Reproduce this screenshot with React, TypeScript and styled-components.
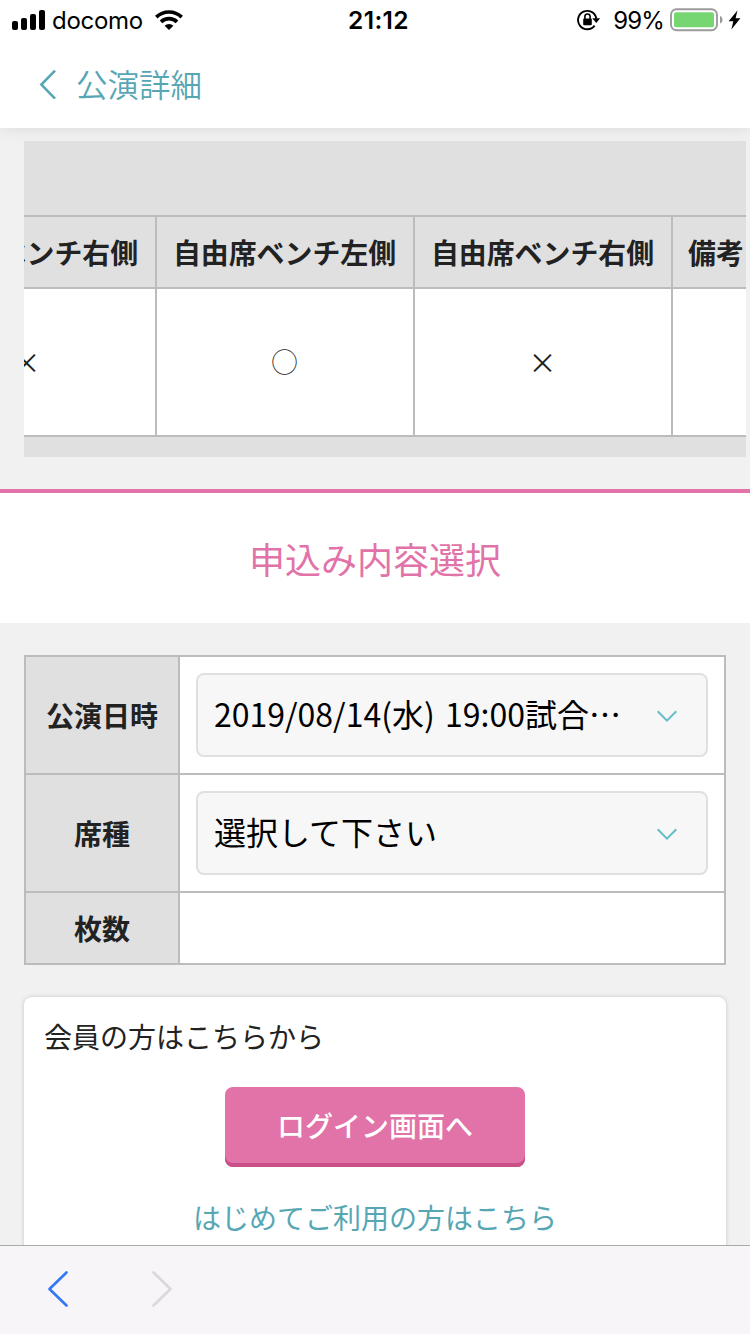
import React from "react";
import styled, { createGlobalStyle } from "styled-components";

const GlobalStyle = createGlobalStyle`
  *, *::before, *::after { box-sizing: border-box; }
  body {
    margin: 0;
    background: #f1f1f1;
    color: #222;
    font-family: "Noto Sans CJK JP", "Noto Sans", sans-serif;
  }
`;

const Screen = styled.div`
  display: flex;
  flex-direction: column;
  width: 750px;
  height: 1334px;
  overflow: hidden;
  background: #f1f1f1;
`;

const Header = styled.header`
  position: relative;
  z-index: 1;
  flex: none;
  height: 128px;
  background: #fff;
  box-shadow: 0 0 16px rgba(0, 0, 0, 0.1);
`;

const StatusBar = styled.div`
  display: grid;
  grid-template-columns: 1fr auto 1fr;
  align-items: center;
  height: 40px;
  padding: 0 9px 0 12px;
  color: #000;
  font: 400 24px/40px Inter, sans-serif;
`;

const StatusGroup = styled.div<{ $end?: boolean }>`
  display: flex;
  align-items: center;
  justify-content: ${({ $end }) => ($end ? "flex-end" : "flex-start")};
  height: 40px;
`;

const Carrier = styled.span`
  width: 103px;
  padding: 1px 0 0 6px;
  font-size: 24px;
  letter-spacing: -0.3px;
`;

const Clock = styled.span`
  padding-left: 4px;
  font-size: 24.5px;
  font-weight: 600;
  letter-spacing: 0.4px;
`;

const Percent = styled.span`
  margin: 0 6px 0 12px;
  padding-top: 1px;
  letter-spacing: -0.9px;
`;

const NavBar = styled.div`
  display: flex;
  align-items: center;
  gap: 20px;
  height: 88px;
  padding: 0 0 0 39px;
  color: #57a6b3;
`;

const NavTitle = styled.h1`
  margin: -3px 0 0;
  font-size: 31.5px;
  font-weight: 350;
  line-height: 84px;
`;

const Content = styled.main`
  flex: 1;
  min-height: 0;
  overflow: hidden;
`;

const SeatScroller = styled.div`
  margin: 13px 4px 32px 24px;
  height: 316px;
  padding-top: 74px;
  overflow: hidden;
  background: #e0e0e0;
`;

const SeatRow = styled.div<{ $head?: boolean }>`
  display: flex;
  width: 1200px;
  margin-left: -127px;
  height: ${({ $head }) => ($head ? 72 : 148)}px;
  border-top: 2px solid #bcbcbc;
  background: ${({ $head }) => ($head ? "#e0e0e0" : "#fff")};
  font-size: ${({ $head }) => ($head ? 27.9 : 28)}px;
  font-weight: ${({ $head }) => ($head ? 700 : 400)};
`;

const SeatCell = styled.div<{ $last?: boolean }>`
  display: flex;
  flex: none;
  align-items: center;
  justify-content: ${({ $last }) => ($last ? "flex-start" : "center")};
  width: ${({ $last }) => ($last ? 426 : 258)}px;
  padding: 0 1px 0 ${({ $last }) => ($last ? 15 : 0)}px;
  border-left: 2px solid #bcbcbc;
  white-space: nowrap;
`;

const SeatMark = styled.span<{ $open: boolean }>`
  padding-bottom: ${({ $open }) => ($open ? 3 : 0)}px;
  font-size: ${({ $open }) => ($open ? 26 : 28)}px;
`;

const SeatFoot = styled.div`
  height: 22px;
  border-top: 2px solid #bcbcbc;
`;

const SectionTitle = styled.h2`
  height: 134px;
  margin: 0;
  border-top: 4px solid #e173a8;
  background: #fff;
  color: #e173a8;
  font-size: 36px;
  font-weight: 400;
  line-height: 130px;
  text-align: center;
`;

const FormTable = styled.div`
  margin: 32px 24px;
  border: 2px solid #bcbcbc;
`;

const FormRow = styled.div<{ $height: number }>`
  display: flex;
  height: ${({ $height }) => $height}px;

  & + & {
    border-top: 2px solid #bcbcbc;
  }
`;

const FormLabel = styled.div`
  display: flex;
  flex: none;
  align-items: center;
  justify-content: center;
  width: 154px;
  border-right: 2px solid #bcbcbc;
  background: #e0e0e0;
  font-size: 28px;
  font-weight: 700;
`;

const FormValue = styled.div`
  flex: 1;
  padding: 16px;
  background: #fff;
`;

const Select = styled.div`
  display: flex;
  align-items: center;
  justify-content: space-between;
  height: 84px;
  padding: 0 28px 0 16px;
  border: 2px solid #e0e0e0;
  border-radius: 8px;
  background: #f7f7f7;
  color: #000;
  font-size: 32px;
  white-space: nowrap;
  word-spacing: 3px;
`;

const SelectText = styled.span`
  padding-bottom: 4px;
`;

const Card = styled.section`
  display: flex;
  flex-direction: column;
  align-items: center;
  height: 400px;
  margin: 0 24px;
  padding: 19px 20px 0;
  border-radius: 8px;
  background: #fff;
  box-shadow: 0 0 4px rgba(0, 0, 0, 0.18);
`;

const CardLead = styled.p`
  align-self: flex-start;
  margin: 0 0 31px;
  font-size: 28px;
  line-height: 40px;
`;

const LoginButton = styled.button`
  width: 300px;
  height: 80px;
  margin: 0 0 29px;
  padding: 0 0 4px;
  border: 0;
  border-radius: 8px;
  background: #e173a8;
  box-shadow: inset 0 -4px 0 #c94f87;
  color: #fff;
  font: 500 28px/40px "Noto Sans CJK JP", sans-serif;
`;

const SignUpLink = styled.a`
  color: #57a6b3;
  font-size: 28px;
  line-height: 42px;
`;

const Toolbar = styled.footer`
  display: flex;
  position: relative;
  flex: none;
  align-items: center;
  gap: 81px;
  height: 89px;
  padding: 0 0 2px 46px;
  border-top: 1px solid #aaa9ab;
  background: #f7f5f7;
`;

const SignalIcon = () => (
  <svg width="34" height="22" viewBox="0 0 34 22">
    <rect x="0" y="12" width="6" height="9" rx="2" />
    <rect x="9" y="9" width="6" height="12" rx="2" />
    <rect x="18" y="5" width="6" height="16" rx="2" />
    <rect x="27" y="1" width="6" height="20" rx="2" />
  </svg>
);

const WifiIcon = () => (
  <svg width="40" height="20" viewBox="-6 0 40 20">
    <g fill="none" stroke="#000" strokeWidth="3.7">
      <path d="M1.3 7.1A18.4 18.4 0 0 1 26.7 7.1" />
      <path d="M6 11.9A11.6 11.6 0 0 1 22 11.9" />
    </g>
    <path d="M14 20l-4.4-4.3a6.4 6.4 0 0 1 8.8 0z" />
  </svg>
);

const RotationLockIcon = () => (
  <svg width="24" height="22" viewBox="0 0 24 22">
    <path
      d="M17.6 16.6A9.2 9.2 0 1 1 19.3 9.5"
      fill="none"
      stroke="#000"
      strokeWidth="1.9"
    />
    <path d="M15.3 9.2h7.8l-3.8 4.7z" />
    <rect x="6.2" y="9.4" width="8.6" height="6.8" rx="1" />
    <path
      d="M7.9 10V7.6a2.6 2.6 0 0 1 5.2 0V10"
      fill="none"
      stroke="#000"
      strokeWidth="1.6"
    />
  </svg>
);

const BatteryIcon = () => (
  <svg width="58" height="24" viewBox="0 0 58 24">
    <rect
      x="1"
      y="1.2"
      width="46"
      height="21"
      rx="5.5"
      fill="#fff"
      stroke="#9b9b9b"
      strokeWidth="1.9"
    />
    <rect x="4" y="4.2" width="40" height="15" rx="2" fill="#76d672" />
    <path d="M50 8c3.4 1.2 3.4 6.4 0 7.6z" fill="#9b9b9b" />
  </svg>
);

const BoltIcon = () => (
  <svg width="13" height="20" viewBox="0 0 13 20">
    <path d="M9.4 0.6L0.6 11.2h4.7L3.4 19.4 12.4 8.2H7.6z" />
  </svg>
);

const BackIcon = () => (
  <svg width="17" height="30" viewBox="0 0 17 30">
    <path
      d="M16 1.6L2.4 15.6 16 29.6"
      fill="none"
      stroke="currentColor"
      strokeWidth="2.6"
    />
  </svg>
);

const DropIcon = () => (
  <svg width="22" height="16" viewBox="0 0 22 16">
    <path
      d="M1.7 4.3L11 13.6l9.3-9.3"
      fill="none"
      stroke="#64bdc9"
      strokeWidth="2"
    />
  </svg>
);

const BrowserArrow = ({ forward }: { forward?: boolean }) => (
  <svg width="24" height="38" viewBox="0 0 24 38">
    <path
      d={forward ? "M2.5 2.5L19.5 19l-17 16.5" : "M20.5 2.5L3.5 19l17 16.5"}
      fill="none"
      stroke={forward ? "#d9d8da" : "#3478f6"}
      strokeWidth="2.7"
      strokeLinecap="round"
      strokeLinejoin="round"
    />
  </svg>
);

const seats = [
  { name: "指定席ベンチ右側", open: false },
  { name: "自由席ベンチ左側", open: true },
  { name: "自由席ベンチ右側", open: false },
];

export default function App() {
  return (
    <Screen>
      <GlobalStyle />
      <Header>
        <StatusBar>
          <StatusGroup>
            <SignalIcon />
            <Carrier>docomo</Carrier>
            <WifiIcon />
          </StatusGroup>
          <Clock>21:12</Clock>
          <StatusGroup $end>
            <RotationLockIcon />
            <Percent>99%</Percent>
            <BatteryIcon />
            <BoltIcon />
          </StatusGroup>
        </StatusBar>
        <NavBar>
          <BackIcon />
          <NavTitle>公演詳細</NavTitle>
        </NavBar>
      </Header>
      <Content>
        <SeatScroller>
          <SeatRow $head>
            {seats.map((seat) => (
              <SeatCell key={seat.name}>{seat.name}</SeatCell>
            ))}
            <SeatCell $last>備考</SeatCell>
          </SeatRow>
          <SeatRow>
            {seats.map((seat) => (
              <SeatCell key={seat.name}>
                <SeatMark $open={seat.open}>{seat.open ? "◯" : "×"}</SeatMark>
              </SeatCell>
            ))}
            <SeatCell $last />
          </SeatRow>
          <SeatFoot />
        </SeatScroller>
        <SectionTitle>申込み内容選択</SectionTitle>
        <FormTable>
          <FormRow $height={116}>
            <FormLabel>公演日時</FormLabel>
            <FormValue>
              <Select>
                <SelectText>2019/08/14(水) 19:00試合…</SelectText>
                <DropIcon />
              </Select>
            </FormValue>
          </FormRow>
          <FormRow $height={118}>
            <FormLabel>席種</FormLabel>
            <FormValue>
              <Select>
                <SelectText>選択して下さい</SelectText>
                <DropIcon />
              </Select>
            </FormValue>
          </FormRow>
          <FormRow $height={72}>
            <FormLabel>枚数</FormLabel>
            <FormValue />
          </FormRow>
        </FormTable>
        <Card>
          <CardLead>会員の方はこちらから</CardLead>
          <LoginButton>ログイン画面へ</LoginButton>
          <SignUpLink>はじめてご利用の方はこちら</SignUpLink>
        </Card>
      </Content>
      <Toolbar>
        <BrowserArrow />
        <BrowserArrow forward />
      </Toolbar>
    </Screen>
  );
}
